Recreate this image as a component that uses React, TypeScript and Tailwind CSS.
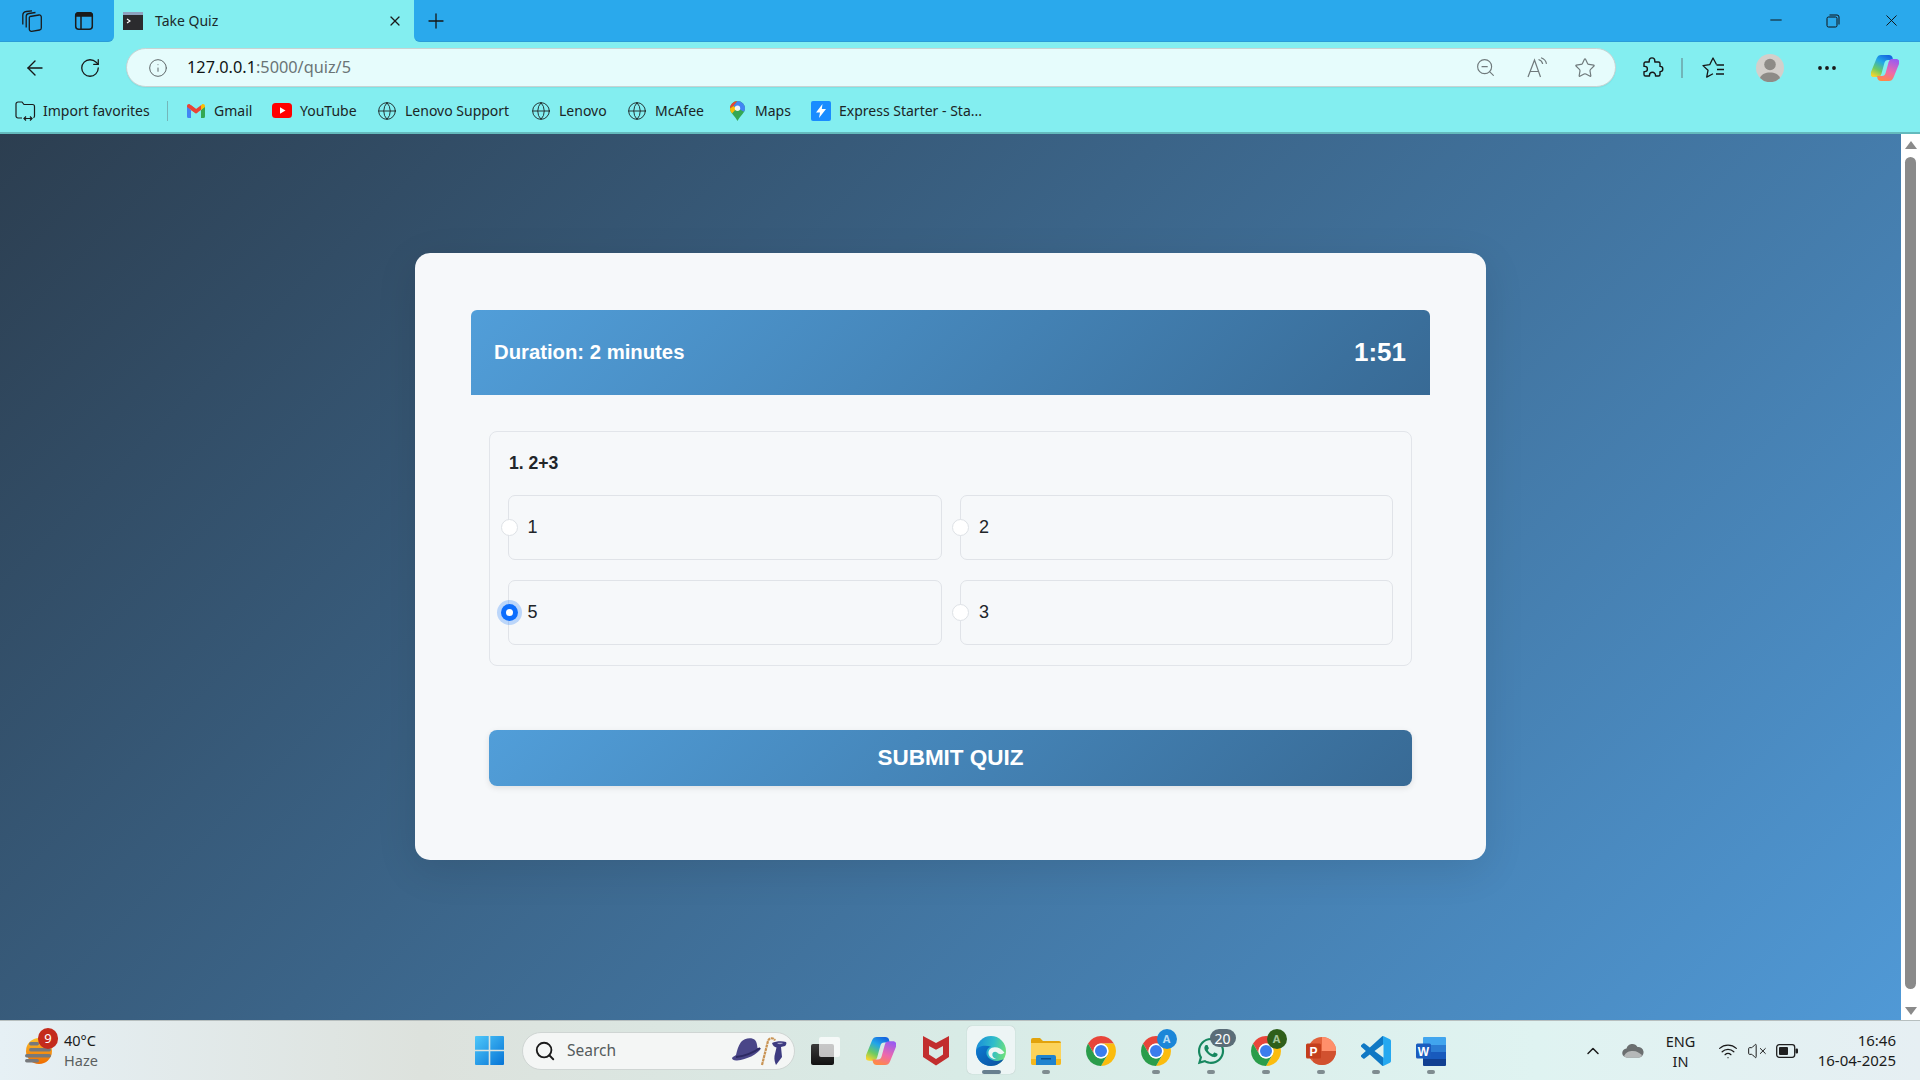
import React from "react";
import { ArrowLeft, ChevronUp, Ellipsis, Globe, Info, Minus, Plus, RotateCw, Search, Star, VolumeX, Wifi, X, ZoomOut } from "lucide-react";
import { FaWhatsapp } from "react-icons/fa";

const ui = "font-['Noto_Sans','Open_Sans',sans-serif]";

function Chrome({ size = 30 }: { size?: number }) {
  return (
    <svg width={size} height={size} viewBox="2 2 28 28">
      <path d="M3.88 9A14 14 0 0 1 28.12 9H16A7 7 0 0 0 9.94 19.5Z" fill="#e8453a" />
      <path d="M28.12 9A14 14 0 0 1 16 30L22.06 19.5A7 7 0 0 0 16 9Z" fill="#fbbc0e" />
      <path d="M16 30A14 14 0 0 1 3.88 9L9.94 19.5A7 7 0 0 0 22.06 19.5Z" fill="#2a9d4b" />
      <circle cx="16" cy="16" r="7" fill="#fff" />
      <circle cx="16" cy="16" r="5.6" fill="#3b7ded" />
    </svg>
  );
}

function Copilot({ w, h, id }: { w: number; h: number; id: string }) {
  return (
    <svg width={w} height={h} viewBox="2 3 28 26">
      <defs>
        <linearGradient id={`${id}a`} x1="0.75" y1="0" x2="0.2" y2="1">
          <stop offset="0" stopColor="#1466e0" />
          <stop offset="0.35" stopColor="#22a6e8" />
          <stop offset="0.7" stopColor="#6ccb62" />
          <stop offset="1" stopColor="#f6d52f" />
        </linearGradient>
        <linearGradient id={`${id}b`} x1="0.7" y1="0" x2="0.3" y2="1">
          <stop offset="0" stopColor="#9a5cf0" />
          <stop offset="0.55" stopColor="#ee69ab" />
          <stop offset="1" stopColor="#ff8a45" />
        </linearGradient>
      </defs>
      <path d="M12 3h8c2 0 3 1 3.5 2.5L24 8h-5c-2 0-3 1-3.6 3l-3 11c-.8 2.5-2.5 3-4.5 3H5c-3 0-4-2.5-3-5L7.5 6.500C8.500 4 10 3 12 3z" fill={`url(#${id}a)`} />
      <path d="M20 29h-8c-2 0-3-1-3.500-2.500L8 24h5c2 0 3-1 3.600-3l3-11c.8-2.500 2.500-3 4.500-3H27c3 0 4 2.500 3 5l-5.500 13.500C23.500 28 22 29 20 29z" fill={`url(#${id}b)`} />
    </svg>
  );
}

function Edge() {
  return (
    <svg width="30" height="30" viewBox="2 2 28 28">
      <defs>
        <linearGradient id="edgeA" x1="0" y1="0.3" x2="1" y2="0.5">
          <stop offset="0" stopColor="#1a8fd8" />
          <stop offset="0.55" stopColor="#2fbccb" />
          <stop offset="1" stopColor="#6fe07a" />
        </linearGradient>
        <linearGradient id="edgeB" x1="0" y1="0" x2="1" y2="1">
          <stop offset="0" stopColor="#0d7bd2" />
          <stop offset="1" stopColor="#0a4f9e" />
        </linearGradient>
      </defs>
      <circle cx="16" cy="16" r="14" fill="url(#edgeA)" />
      <path d="M2 16c0 8 6 14 14 14 5 0 9-2.500 12-6.500-4 2.500-11 2.500-14.500-1.500C10 18 12 13 16 12 11 10 3 11 2 16z" fill="url(#edgeB)" />
      <path d="M28.500 17.500C26 14 23 12.500 19.500 12.500c-4 0-6.500 3-5.700 6.500.7 3 3.700 4.800 7.200 4.500-2.700-.7-4.200-3-3.700-5 .5-2 3-2.500 4.500-1 1.700 1.800 5 2 6.700 0z" fill="#eef6f5" />
    </svg>
  );
}

function Folder() {
  return (
    <svg width="30" height="28" viewBox="0 0 30 28">
      <path d="M0 3a2 2 0 0 1 2-2h7l3 3h16a2 2 0 0 1 2 2v3H0z" fill="#e2a30c" />
      <path d="M0 6h30v20a2 2 0 0 1-2 2H2a2 2 0 0 1-2-2z" fill="#fcd35a" />
      <path d="M0 22h30v4a2 2 0 0 1-2 2H2a2 2 0 0 1-2-2z" fill="#f5b81c" />
      <path d="M5 20a2 2 0 0 1 2-2h16a2 2 0 0 1 2 2v8H5z" fill="#1f83cf" />
      <rect x="10" y="21" width="10" height="1.500" fill="#0b4f8d" />
    </svg>
  );
}

function McAfee() {
  return (
    <svg width="28" height="31" viewBox="0 0 28 31">
      <path fillRule="evenodd" d="M1 1l13 7 13-7v21l-13 8.500L1 22zM7 11v8.500l7 4.500 7-4.500V11l-7 3.800z" fill="#c22e2e" />
    </svg>
  );
}

function Ppt() {
  return (
    <svg width="30" height="30" viewBox="0 0 30 30">
      <circle cx="16" cy="15" r="14" fill="#e0613a" />
      <path d="M16 1a14 14 0 0 1 14 14H16z" fill="#ff8f6b" />
      <path d="M30 15a14 14 0 0 1-14 14 14 14 0 0 1-9-3.300V15z" fill="#d1512f" />
      <rect x="0" y="7.500" width="15" height="15" rx="1.500" fill="#c43e1c" />
      <text x="7.500" y="19.500" textAnchor="middle" fontSize="12" fontWeight="700" fill="#fff" fontFamily="Liberation Sans">P</text>
    </svg>
  );
}

function Word() {
  return (
    <svg width="30" height="30" viewBox="0 0 30 30">
      <path d="M7 2a1 1 0 0 1 1-1h21a1 1 0 0 1 1 1v7H7z" fill="#41a5ee" />
      <rect x="7" y="9" width="23" height="7" fill="#2b7cd3" />
      <rect x="7" y="16" width="23" height="7" fill="#185abd" />
      <path d="M7 23h23v6a1 1 0 0 1-1 1H8a1 1 0 0 1-1-1z" fill="#103f91" />
      <rect x="0" y="7.500" width="15" height="15" rx="1.500" fill="#1a5cbe" />
      <text x="7.500" y="19.500" textAnchor="middle" fontSize="12" fontWeight="700" fill="#fff" fontFamily="Liberation Sans">W</text>
    </svg>
  );
}

function VSCode() {
  return (
    <svg width="30" height="30" viewBox="0 0 24 24">
      <defs>
        <linearGradient id="vsc" x1="0" y1="0" x2="1" y2="0">
          <stop offset="0.72" stopColor="#0f78c4" />
          <stop offset="0.72" stopColor="#25a8f0" />
        </linearGradient>
      </defs>
      <path d="M23.15 2.587L18.21.21a1.494 1.494 0 0 0-1.705.29l-9.46 8.63-4.12-3.128a.999.999 0 0 0-1.276.057L.327 7.261A1 1 0 0 0 .326 8.74L3.899 12 .326 15.26a1 1 0 0 0 .001 1.479L1.65 17.94a.999.999 0 0 0 1.276.057l4.12-3.128 9.46 8.63a1.492 1.492 0 0 0 1.704.29l4.942-2.377A1.5 1.5 0 0 0 24 20.06V3.939a1.5 1.5 0 0 0-.85-1.352zm-5.146 14.861L10.826 12l7.178-5.448v10.896z" fill="url(#vsc)" />
    </svg>
  );
}

function TaskView() {
  return (
    <svg width="30" height="30" viewBox="0 0 30 30">
      <defs>
        <linearGradient id="tvA" x1="0" y1="0" x2="0" y2="1">
          <stop offset="0" stopColor="#3a3a3a" />
          <stop offset="1" stopColor="#111" />
        </linearGradient>
      </defs>
      <rect x="0" y="8" width="23" height="21" rx="2" fill="url(#tvA)" />
      <rect x="8" y="1" width="21" height="20" rx="2" fill="#fff" fillOpacity="0.72" />
    </svg>
  );
}

function WinLogo() {
  return (
    <svg width="29" height="29" viewBox="0 0 29 29" className="shrink-0">
      <defs>
        <linearGradient id="win" x1="0" y1="0" x2="1" y2="1">
          <stop offset="0" stopColor="#4fc8fa" />
          <stop offset="1" stopColor="#0674d6" />
        </linearGradient>
      </defs>
      <path d="M0 1a1 1 0 0 1 1-1h12.700v13.700H0zM15.300 0H28a1 1 0 0 1 1 1v12.700H15.300zM0 15.300h13.700V29H1a1 1 0 0 1-1-1zM15.300 15.300H29V28a1 1 0 0 1-1 1H15.300z" fill="url(#win)" />
    </svg>
  );
}

function Weather() {
  return (
    <svg width="32" height="28" viewBox="0 0 32 28">
      <defs>
        <linearGradient id="sun" x1="0" y1="0" x2="0" y2="1">
          <stop offset="0" stopColor="#fbc02d" />
          <stop offset="1" stopColor="#ef6c00" />
        </linearGradient>
      </defs>
      <circle cx="15" cy="14" r="13" fill="url(#sun)" />
      <rect x="5" y="5" width="10" height="3.500" rx="1.700" fill="#77797c" />
      <rect x="5" y="11" width="22" height="3.500" rx="1.700" fill="#77797c" />
      <rect x="1" y="17" width="26" height="3.500" rx="1.700" fill="#77797c" />
      <rect x="1" y="22" width="14" height="3.500" rx="1.700" fill="#77797c" />
    </svg>
  );
}

function HatCaneTie() {
  return (
    <svg width="56" height="30" viewBox="0 0 56 30" className="shrink-0">
      <path d="M10 6c3-4 11-5 14-2 2 2 2 5 2.500 8l3.500.500c-4 6-14 11-24 12-3 .3-5-1-5-2.500 0-.8 2-1.500 4-3C6 15 7 10 10 6z" fill="#4a4688" />
      <path d="M5 21c8-1 17-4 24-9" stroke="#2d2a63" strokeWidth="2" fill="none" />
      <path d="M31 29L37 5c.7-3 5.500-4 7-.5" stroke="#c99455" strokeWidth="2.200" fill="none" strokeDasharray="3 .6" />
      <path d="M41 7c4-2 10-2.500 14-1 1 .8 0 3.500-1 4l-4 1 1 10-6 8c-1-3-2-5-1.500-9l2-8.500c-2-.5-3.500-1.500-4.500-4.500z" fill="#3d3b80" />
      <path d="M46 7c2-.5 5-.5 6 0-1 1-4 2-6 0z" fill="#a8a8cc" />
    </svg>
  );
}

function Collections() {
  return (
    <svg width="24" height="24" viewBox="0 0 24 24" fill="none" stroke="#1b1b1b" strokeWidth="1.300">
      <path d="M10 7.500l9-1.500a2 2 0 0 1 2.300 2v11a2 2 0 0 1-1.700 2l-8 1.300a2 2 0 0 1-2.300-2V9.500a2 2 0 0 1 .7-2z" />
      <path d="M6.200 18.500V7.500A3 3 0 0 1 8.800 4.500l6.700-1" />
      <path d="M2.800 15.500V6.500A4 4 0 0 1 6.300 2.500L12 1.800" />
    </svg>
  );
}

function VerticalTabs() {
  return (
    <svg width="22" height="22" viewBox="0 0 22 22" fill="none" stroke="#1b1b1b" strokeWidth="1.500">
      <rect x="2.700" y="2.700" width="16.600" height="16.600" rx="3" />
      <path d="M2.700 6h16.600v-.5a2.800 2.800 0 0 0-2.800-2.800h-11a2.800 2.800 0 0 0-2.800 2.800z" fill="#1b1b1b" />
      <path d="M8 6v13" />
    </svg>
  );
}

function Terminal() {
  return (
    <svg width="20" height="18" viewBox="0 0 20 18" className="shrink-0">
      <rect width="20" height="18" fill="#2b2b2e" />
      <rect width="20" height="3" fill="#8ea3c0" />
      <path d="M4 7l3 2-3 2" stroke="#fff" strokeWidth="1.100" fill="none" />
    </svg>
  );
}

function ImportFav() {
  return (
    <svg width="21" height="20" viewBox="0 0 21 20" fill="none" stroke="#1b1b1b" strokeWidth="1.200">
      <path d="M7 17H3a2 2 0 0 1-2-2V3a2 2 0 0 1 2-2h4l2 2.500h8.500a2 2 0 0 1 2 2V15a2 2 0 0 1-1 1.800" />
      <path d="M9 17.500h8M11 15.500l-2 2 2 2M15 15.500l2 2-2 2" />
    </svg>
  );
}

function Gmail() {
  return (
    <svg width="18" height="14" viewBox="0 0 18 14">
      <path d="M0 2v10.500A1.500 1.500 0 0 0 1.500 14H4V6z" fill="#4285f4" />
      <path d="M18 2v10.500a1.500 1.500 0 0 1-1.500 1.500H14V6z" fill="#34a853" />
      <path d="M0 2C0 .3 2-.5 3 .5L9 5l2 3-2 1.500L0 3z" fill="#ea4335" />
      <path d="M4 1.300L9 5l5-3.700V6L9 9.500 4 6z" fill="#ea4335" />
      <path d="M14 1.300L15 .5c1-1 3-.2 3 1.500v1L14 6z" fill="#fbbc04" />
    </svg>
  );
}

function YouTube() {
  return (
    <svg width="20" height="15" viewBox="0 0 20 15">
      <rect width="20" height="15" rx="3.500" fill="#f00" />
      <path d="M8 4.200l5.500 3.300L8 10.800z" fill="#fff" />
    </svg>
  );
}

function Maps() {
  return (
    <svg width="15" height="20" viewBox="0 0 15 20">
      <path d="M7.500 0A7.500 7.500 0 0 1 15 7.500c0 4.500-5 7.500-7.500 12.500C5 15 0 12 0 7.500A7.500 7.500 0 0 1 7.500 0z" fill="#34a853" />
      <path d="M2 2.500A7.500 7.500 0 0 1 7.500 0L3.500 5 0 7.500a7.500 7.500 0 0 1 2-5z" fill="#ea4335" />
      <path d="M0 7.500c0 2 .9 3.500 2 5L7 7 3.500 5z" fill="#fbbc04" />
      <path d="M7.500 0A7.500 7.500 0 0 1 15 7.500c0 1.200-.4 2.300-1 3.300L3.500 5z" fill="#4285f4" />
      <circle cx="7.500" cy="7.200" r="2.700" fill="#fff" fillOpacity="0.9" />
    </svg>
  );
}

function ExpressIcon() {
  return (
    <svg width="20" height="20" viewBox="0 0 20 20">
      <rect width="20" height="20" rx="2" fill="#1a8cff" />
      <path d="M11.500 3L5 11.500h4L8 17l7-9h-4.200z" fill="#fff" />
    </svg>
  );
}

function ReadAloud() {
  return (
    <svg width="22" height="22" viewBox="0 0 22 22" fill="none" stroke="#707a7c" strokeWidth="1.200">
      <path d="M2 20L8.500 3l6 17M4.300 14.500h8.500" />
      <path d="M12.500 2.500c2.500.8 3.800 2.300 4.200 4.500M15 .8c3 1 5 3.200 5.500 6" />
    </svg>
  );
}

function FavList() {
  return (
    <svg width="24" height="24" viewBox="0 0 24 24" fill="none" stroke="#161616" strokeWidth="1.300">
      <path d="M15.500 9H23M16 13.500h7M15 18h8" />
      <path d="M15.500 8.500L12 2 8.700 8.700 2 9.600l5 4.700-1.300 6.800L12 17.700" strokeLinejoin="round" />
    </svg>
  );
}

function Extension() {
  return (
    <svg width="24" height="24" viewBox="0 0 24 24" fill="none" stroke="#161616" strokeWidth="1.400" strokeLinejoin="round">
      <path d="M9.200 4.700a2.800 2.800 0 0 1 5.600 0V6h3.700a1.500 1.500 0 0 1 1.500 1.500v2.900h.2a2.600 2.600 0 0 1 0 5.200H20v2.900a1.500 1.500 0 0 1-1.500 1.500h-3v-.7a3 3 0 0 0-6 0v.7h-4a1.500 1.500 0 0 1-1.500-1.500v-2.900h.8a2.600 2.600 0 0 0 0-5.200H4V7.500A1.500 1.500 0 0 1 5.500 6h3.700z" />
    </svg>
  );
}

function Profile() {
  return (
    <svg width="28" height="28" viewBox="0 0 28 28">
      <circle cx="14" cy="14" r="14" fill="#d3cfcb" />
      <circle cx="14" cy="10.500" r="5.800" fill="#8e8b87" />
      <path d="M4 24c1.500-4 5.500-5.500 10-5.500S22.500 20 24 24a14 14 0 0 1-20 0z" fill="#8e8b87" />
    </svg>
  );
}

function Restore() {
  return (
    <svg width="14" height="14" viewBox="0 0 14 14" fill="none" stroke="#111" strokeWidth="1">
      <rect x="1" y="3" width="10" height="10" rx="1.500" />
      <path d="M3.500 1h7.500a2 2 0 0 1 2 2v7.500" />
    </svg>
  );
}

function Cloud() {
  return (
    <svg width="22" height="15" viewBox="0 0 22 15">
      <path d="M5 14.500a4.500 4.500 0 0 1-.5-9A6 6 0 0 1 15.500 4a5 5 0 0 1 1.500 10.500z" fill="#6b6f70" />
      <path d="M2 13c2-4 5-5 9-5 4 0 6 2 9 4-1 1.800-2 2.500-3 2.500H5c-1.500 0-2.500-.6-3-1.500z" fill="#b5b8b8" />
    </svg>
  );
}

function Battery() {
  return (
    <svg width="22" height="14" viewBox="0 0 22 14">
      <rect x="0.700" y="0.700" width="18" height="12.600" rx="2.500" fill="none" stroke="#1f1f1f" strokeWidth="1.300" />
      <rect x="3" y="3" width="9" height="8" rx="1" fill="#1f1f1f" />
      <rect x="19.500" y="4.500" width="2.500" height="5" rx="1" fill="#1f1f1f" />
    </svg>
  );
}

function Bookmark({ className, icon, label }: { className: string; icon: React.ReactNode; label: string }) {
  return (
    <div className={`flex items-center shrink-0 ${className}`}>
      <span className="flex w-[20px] justify-center shrink-0">{icon}</span>
      <span className="ml-[8px] whitespace-nowrap text-[14px] text-[#1c2526]">{label}</span>
    </div>
  );
}

function TaskIcon({ children, dot, active, badge }: { children: React.ReactNode; dot?: boolean; active?: boolean; badge?: React.ReactNode }) {
  return (
    <div className="relative flex h-full w-[55px] shrink-0 items-center justify-center">
      {active && <div className="absolute left-[3.500px] top-[5px] h-[48px] w-[48px] rounded-[5px] bg-[#edf5f5] shadow-[0_0_1px_rgba(0,0,0,0.25)]" />}
      <div className="relative flex">{children}</div>
      {badge}
      {dot && <div className="absolute bottom-[6px] left-[23.500px] h-[4px] w-[8px] rounded-full bg-[#7f8c90]" />}
      {active && <div className="absolute bottom-[6px] left-[18px] h-[4px] w-[19px] rounded-full bg-[#677f8f]" />}
    </div>
  );
}

function Option({ label, checked }: { label: string; checked?: boolean }) {
  return (
    <label className="flex h-[65px] items-center rounded-[7px] border border-[#e0e3e8]">
      {checked ? (
        <span className="-ml-[8.500px] flex h-[17px] w-[17px] shrink-0 items-center justify-center rounded-full bg-[#0d6efd] shadow-[0_0_0_4px_rgba(13,110,253,0.25)]">
          <span className="h-[7px] w-[7px] rounded-full bg-white" />
        </span>
      ) : (
        <span className="-ml-[8.500px] h-[17px] w-[17px] shrink-0 rounded-full border border-[#dee2e6] bg-white" />
      )}
      <span className="ml-[10px] -mt-[1px] text-[18px] text-[#212529]">{label}</span>
    </label>
  );
}

export default function App() {
  return (
    <div className={`flex h-[1080px] w-[1920px] flex-col overflow-hidden ${ui}`}>
      {/* Browser chrome */}
      <header className="h-[134px] shrink-0 border-b-2 border-[#64babd] bg-[#83eef0]">
        <div className="flex h-[42px]">
          <div className="flex w-[114px] items-center rounded-br-[6px] border-b border-[#2a9cd9] bg-[#2aa9ec] pl-[6px]">
            <span className="flex w-[52px] justify-center"><Collections /></span>
            <span className="flex w-[52px] justify-center"><VerticalTabs /></span>
          </div>
          <div className="flex w-[300px] items-center rounded-t-[8px] pl-[9px] pr-[11px]">
            <Terminal />
            <span className="ml-[12px] -mt-[1px] text-[14px] text-[#1d2a2c]">Take Quiz</span>
            <X className="ml-auto" size={16} color="#1b1b1b" strokeWidth={1.800} />
          </div>
          <div className="flex flex-1 items-center rounded-bl-[6px] border-b border-[#2a9cd9] bg-[#2aa9ec]">
            <Plus className="ml-[10px]" size={24} color="#161616" strokeWidth={1.300} />
            <div className="ml-auto flex">
              <span className="flex w-[58px] justify-center pl-[1px]"><Minus size={18} color="#111" strokeWidth={1.300} /></span>
              <span className="flex w-[58px] items-center justify-center"><Restore /></span>
              <span className="flex w-[58px] justify-center"><X size={19} color="#111" strokeWidth={1.200} /></span>
            </div>
          </div>
        </div>
        <div className="flex h-[45px] items-start pl-[7px] pt-[6px]">
          <span className="flex h-[39px] w-[55px] items-center justify-center"><ArrowLeft size={24} color="#171717" strokeWidth={1.400} /></span>
          <span className="flex h-[39px] w-[55px] items-center justify-center"><RotateCw size={22} color="#171717" strokeWidth={1.400} /></span>
          <div className="ml-[9px] flex h-[39px] w-[1490px] items-center rounded-full border border-[#c8d3d3] bg-[#e6fcfc] pl-[21px] pr-[5px] shadow-[0_1px_1px_rgba(0,0,0,0.05)]">
            <Info size={20} color="#5f686a" strokeWidth={1.200} />
            <span className="ml-[19px] whitespace-nowrap text-[16.300px] text-[#101415]">127.0.0.1<span className="text-[#6a7476]">:5000/quiz/5</span></span>
            <div className="ml-auto flex">
              <span className="flex w-[50px] justify-center"><ZoomOut size={21} color="#707a7c" strokeWidth={1.300} /></span>
              <span className="flex w-[50px] justify-center pl-[3px]"><ReadAloud /></span>
              <span className="flex w-[50px] justify-center"><Star size={22} color="#707a7c" strokeWidth={1.300} /></span>
            </div>
          </div>
          <div className="flex h-[39px] items-center">
            <span className="ml-[24px] flex"><Extension /></span>
            <div className="ml-[17px] h-[20px] w-[2px] bg-[#71b5b9]" />
            <span className="ml-[18px] flex"><FavList /></span>
            <span className="ml-[31px] flex"><Profile /></span>
            <Ellipsis className="ml-[31px]" size={24} color="#1a1a1a" strokeWidth={1.800} />
            <span className="ml-[32px] flex"><Copilot w={28} h={26} id="cpTop" /></span>
          </div>
        </div>
        <div className="flex h-[45px] items-center pt-[2px]">
          <div className="ml-[15px] flex w-[152px] shrink-0 items-center">
            <ImportFav />
            <span className="ml-[7px] whitespace-nowrap text-[14px] text-[#1c2526]">Import favorites</span>
          </div>
          <div className="h-[20px] w-px shrink-0 bg-[#74b6b9]" />
          <Bookmark className="ml-[18px] w-[86px]" icon={<Gmail />} label="Gmail" />
          <Bookmark className="w-[105px]" icon={<YouTube />} label="YouTube" />
          <Bookmark className="w-[154px]" icon={<Globe size={20} color="#1c2526" strokeWidth={1.100} />} label="Lenovo Support" />
          <Bookmark className="w-[96px]" icon={<Globe size={20} color="#1c2526" strokeWidth={1.100} />} label="Lenovo" />
          <Bookmark className="w-[100px]" icon={<Globe size={20} color="#1c2526" strokeWidth={1.100} />} label="McAfee" />
          <Bookmark className="w-[84px]" icon={<Maps />} label="Maps" />
          <Bookmark className="" icon={<ExpressIcon />} label="Express Starter - Sta..." />
        </div>
      </header>

      {/* Page */}
      <div className="flex min-h-0 flex-1">
        <main className="flex flex-1 justify-center bg-[linear-gradient(135deg,#2c3e50,#5099d6)] font-['Liberation_Sans',Arial,sans-serif]">
          <section className="mt-[119px] h-[607px] w-[1071px] rounded-[15px] bg-[#f6f8fa] px-[56px] pt-[57px] shadow-[0_10px_40px_rgba(0,0,0,0.1)]">
            <div className="flex h-[85px] items-center justify-between rounded-t-[6px] bg-[linear-gradient(135deg,#519ed9,#386a95)] pl-[23px] pr-[24px] text-white">
              <span className="-mt-[1px] text-[20.300px] font-bold">Duration: 2 minutes</span>
              <span className="text-[26px] font-bold">1:51</span>
            </div>
            <div className="mx-[18px] mt-[36px] rounded-[8px] border border-[#e2e5ea] px-[19px] pb-[20px] pt-[19px]">
              <div className="mb-[20px] text-[17.600px] leading-[24px] font-bold text-[#212529]">1. 2+3</div>
              <div className="-mx-[1px] grid grid-cols-2 gap-x-[18px] gap-y-[20px]">
                <Option label="1" />
                <Option label="2" />
                <Option label="5" checked />
                <Option label="3" />
              </div>
            </div>
            <button className="mx-[18px] mt-[64px] block h-[56px] w-[923px] rounded-[8px] bg-[linear-gradient(135deg,#519ed9,#386a95)] text-[22.500px] font-bold text-white shadow-[0_2px_6px_rgba(0,0,0,0.1)]">
              SUBMIT QUIZ
            </button>
          </section>
        </main>
        {/* Scrollbar */}
        <aside className="flex w-[19px] shrink-0 flex-col items-center bg-white">
          <div className="mt-[7px] h-0 w-0 border-x-[6px] border-b-[8px] border-x-transparent border-b-[#8a8a8a]" />
          <div className="mt-[8px] h-[832px] w-[11px] rounded-full bg-[#8a8a8a]" />
          <div className="mt-[18px] h-0 w-0 border-x-[6px] border-t-[8px] border-x-transparent border-t-[#8a8a8a]" />
        </aside>
      </div>

      {/* Taskbar */}
      <footer className="flex h-[60px] shrink-0 items-center border-t border-[#b7bfbf] bg-[linear-gradient(90deg,#e6f0f5,#dde2dd_22%,#d8ebe6_50%,#dff3f1_80%,#e6eff3)]">
        <div className="relative flex h-full w-[475px] shrink-0 items-center pl-[24px]">
          <Weather />
          <span className="absolute left-[38px] top-[7px] flex h-[21px] w-[20px] items-center justify-center rounded-full bg-[#c42b1c] text-[13px] text-white">9</span>
          <div className="ml-[8px] -mt-[2px] text-[14.500px] leading-[20px]">
            <div className="text-[#1b1b1b]">40°C</div>
            <div className="text-[#5b5f60]">Haze</div>
          </div>
        </div>
        <WinLogo />
        <div className="ml-[18px] flex h-[38px] w-[273px] shrink-0 items-center rounded-full border border-[#cfd5d3] bg-[#f4f6f5] pl-[11px] pr-[7px]">
          <Search size={22} color="#1a1a1a" strokeWidth={2} />
          <span className="ml-[11px] text-[15.500px] text-[#555b5c]">Search</span>
          <span className="ml-auto flex"><HatCaneTie /></span>
        </div>
        <div className="ml-[3.500px] flex h-full">
          <TaskIcon><TaskView /></TaskIcon>
          <TaskIcon><Copilot w={30} h={28} id="cpTask" /></TaskIcon>
          <TaskIcon><McAfee /></TaskIcon>
          <TaskIcon active><Edge /></TaskIcon>
          <TaskIcon dot><Folder /></TaskIcon>
          <TaskIcon><Chrome /></TaskIcon>
          <TaskIcon dot badge={<span className="absolute left-[28px] top-[8px] flex h-[20px] w-[20px] items-center justify-center rounded-full bg-[#1b86d8] text-[11px] font-bold text-[#b6dcf5]">A</span>}><Chrome /></TaskIcon>
          <TaskIcon dot badge={<span className="absolute left-[26px] top-[8px] flex h-[18px] w-[26px] items-center justify-center rounded-full bg-[#5b6d78] text-[14px] text-white">20</span>}><FaWhatsapp size={30} color="#16875f" /></TaskIcon>
          <TaskIcon dot badge={<span className="absolute left-[28px] top-[8px] flex h-[20px] w-[20px] items-center justify-center rounded-full bg-[#2f5f1a] text-[11px] font-bold text-[#a5c59a]">A</span>}><Chrome /></TaskIcon>
          <TaskIcon dot><Ppt /></TaskIcon>
          <TaskIcon dot><VSCode /></TaskIcon>
          <TaskIcon dot><Word /></TaskIcon>
        </div>
        <div className="flex flex-1 items-center pr-[24px] text-[#1b1b1b]">
          <ChevronUp className="ml-[124px]" size={20} color="#1b1b1b" strokeWidth={1.800} />
          <span className="ml-[19px] flex w-[22px]"><Cloud /></span>
          <div className="ml-[17px] w-[40px] text-center text-[14.500px] leading-[20px]">
            <div>ENG</div>
            <div>IN</div>
          </div>
          <Wifi className="ml-[17px]" size={20} color="#1b1b1b" strokeWidth={1.500} />
          <VolumeX className="ml-[9px]" size={20} color="#1b1b1b" strokeWidth={1.200} />
          <span className="ml-[9px] flex"><Battery /></span>
          <div className="ml-auto -mt-[2px] text-right text-[15px] leading-[20px]">
            <div>16:46</div>
            <div>16-04-2025</div>
          </div>
        </div>
      </footer>
    </div>
  );
}
